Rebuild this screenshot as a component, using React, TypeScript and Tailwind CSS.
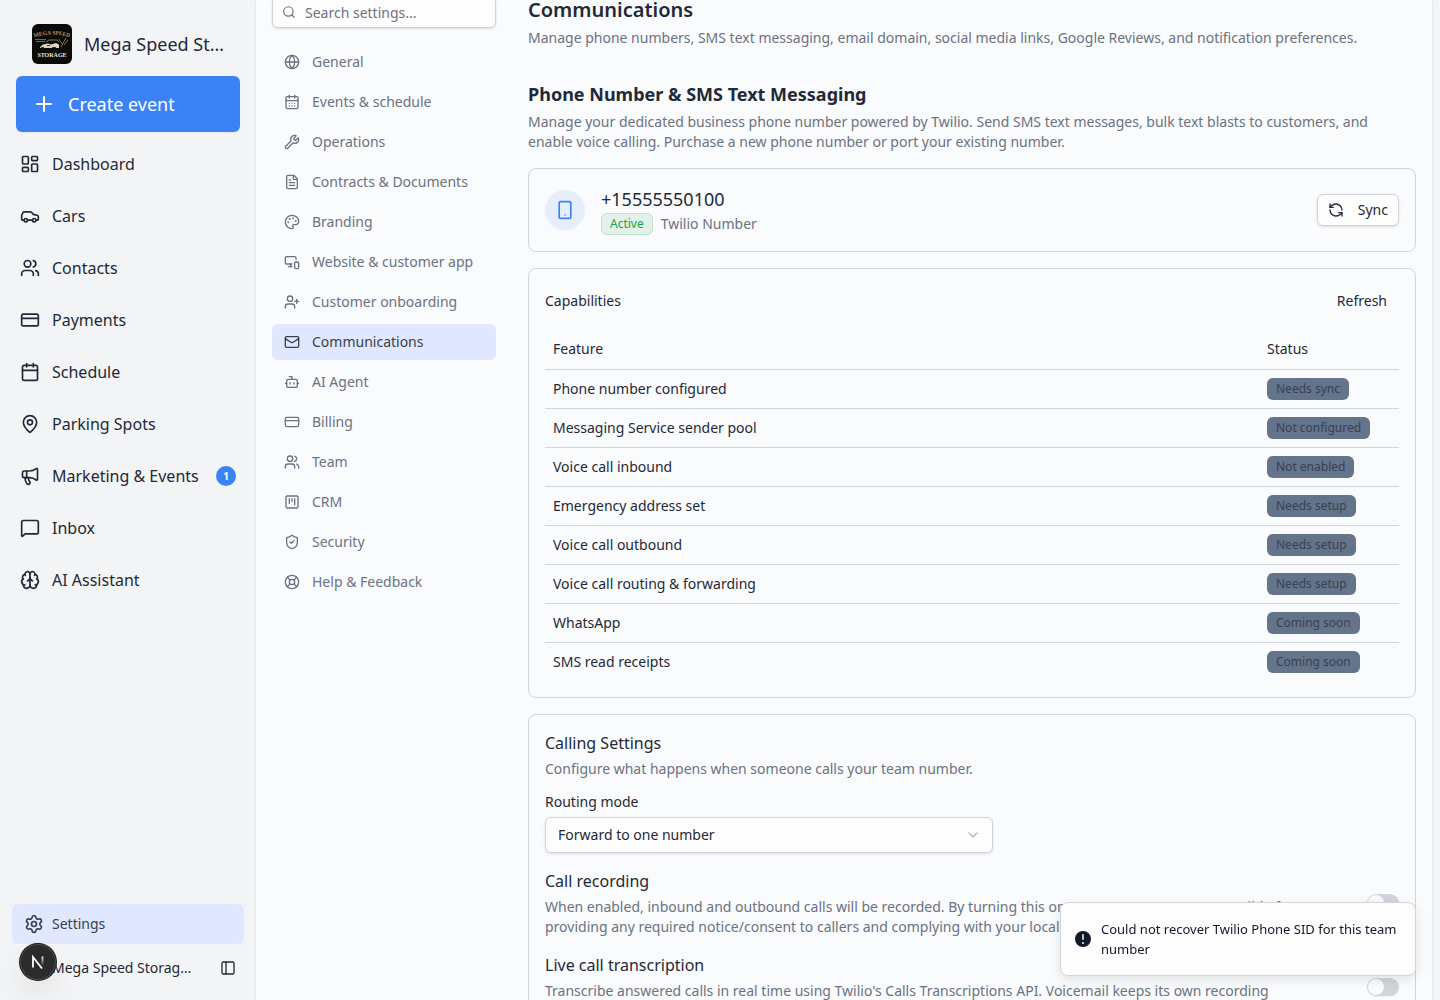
import React from 'react';
import {
  Bot,
  Brain,
  Calendar,
  CalendarDays,
  Car,
  ChevronDown,
  CreditCard,
  FileText,
  Globe,
  LayoutDashboard,
  LifeBuoy,
  Mail,
  MapPin,
  Megaphone,
  MessageSquare,
  MonitorSmartphone,
  Palette,
  PanelLeft,
  Plus,
  RefreshCcw,
  Search,
  Settings,
  ShieldCheck,
  Smartphone,
  SquareKanban,
  UserPlus,
  Users,
  Wrench,
} from 'lucide-react';
import type { LucideIcon } from 'lucide-react';

interface NavItem {
  label: string;
  icon: LucideIcon;
  badge?: number;
}

const mainNav: NavItem[] = [
  { label: 'Dashboard', icon: LayoutDashboard },
  { label: 'Cars', icon: Car },
  { label: 'Contacts', icon: Users },
  { label: 'Payments', icon: CreditCard },
  { label: 'Schedule', icon: Calendar },
  { label: 'Parking Spots', icon: MapPin },
  { label: 'Marketing & Events', icon: Megaphone, badge: 1 },
  { label: 'Inbox', icon: MessageSquare },
  { label: 'AI Assistant', icon: Brain },
];

const settingsNav: NavItem[] = [
  { label: 'General', icon: Globe },
  { label: 'Events & schedule', icon: CalendarDays },
  { label: 'Operations', icon: Wrench },
  { label: 'Contracts & Documents', icon: FileText },
  { label: 'Branding', icon: Palette },
  { label: 'Website & customer app', icon: MonitorSmartphone },
  { label: 'Customer onboarding', icon: UserPlus },
  { label: 'Communications', icon: Mail },
  { label: 'AI Agent', icon: Bot },
  { label: 'Billing', icon: CreditCard },
  { label: 'Team', icon: Users },
  { label: 'CRM', icon: SquareKanban },
  { label: 'Security', icon: ShieldCheck },
  { label: 'Help & Feedback', icon: LifeBuoy },
];

const capabilities = [
  { feature: 'Phone number configured', status: 'Needs sync' },
  { feature: 'Messaging Service sender pool', status: 'Not configured' },
  { feature: 'Voice call inbound', status: 'Not enabled' },
  { feature: 'Emergency address set', status: 'Needs setup' },
  { feature: 'Voice call outbound', status: 'Needs setup' },
  { feature: 'Voice call routing & forwarding', status: 'Needs setup' },
  { feature: 'WhatsApp', status: 'Coming soon' },
  { feature: 'SMS read receipts', status: 'Coming soon' },
];

const TeamLogo: React.FC = () => (
  <svg viewBox="0 0 40 40" className="size-10 shrink-0 rounded-md" aria-hidden="true">
    <rect width="40" height="40" fill="#0b0b09" />
    <path id="logo-arc" d="M2 13.500Q20 7.500 38 13.500" fill="none" />
    <text fontFamily="Liberation Serif, serif" fontSize="5.500" fontWeight="700" fill="#b39a6b">
      <textPath href="#logo-arc" startOffset="50%" textAnchor="middle">MEGA SPEED</textPath>
    </text>
    <path d="M3 15.500h11M4 17.500h9" stroke="#7d6a48" strokeWidth="1.200" />
    <path d="M14 18l3-2h8l2 2M27 15l3 5M34 14l-5 9M36 16l-4 5" stroke="#8d7a58" strokeWidth="0.900" fill="none" />
    <path d="M8 23l3-2.500 5-1 3 1 5-1.500 3 1.500v3.500H8z" fill="#d8d3c4" />
    <path d="M9 23.500h3M15 21.500h3M20 23.500h4" stroke="#25221a" strokeWidth="0.900" />
    <text x="20" y="32.500" textAnchor="middle" fontFamily="Liberation Serif, serif" fontSize="6" fontWeight="700" fill="#e8e4da">
      STORAGE
    </text>
  </svg>
);

const Sidebar: React.FC = () => (
  <aside className="flex h-screen w-64 shrink-0 flex-col">
    <div className="px-4 pt-6">
      <div className="flex items-center gap-3 px-4">
        <TeamLogo />
        <span className="truncate text-lg">Mega Speed Storage</span>
      </div>
      <button className="mt-3 flex h-14 w-full items-center gap-3 rounded-md bg-[#3b82f6] px-4 text-lg text-white shadow-xs">
        <Plus size={24} strokeWidth={2} />
        Create event
      </button>
    </div>
    <nav className="mt-2 flex flex-1 flex-col gap-1 px-3">
      {mainNav.map(({ label, icon: Icon, badge }) => (
        <a key={label} href="#" className="flex h-12 items-center gap-3 rounded-md px-2">
          <Icon size={20} className="shrink-0" />
          <span className="whitespace-nowrap">{label}</span>
          {badge && (
            <span className="ml-auto flex size-5 items-center justify-center rounded-full bg-[#3b82f6] text-[10px] font-bold text-white">
              {badge}
            </span>
          )}
        </a>
      ))}
    </nav>
    <div className="px-3 pb-2">
      <a href="#" className="flex h-10 items-center gap-2 rounded-md bg-[#e0e7ff] px-3 text-sm text-[#374151]">
        <Settings size={20} />
        Settings
      </a>
      <div className="flex h-12 items-center justify-between gap-6 pr-2 pl-10">
        <span className="truncate text-sm">Mega Speed Storage Club</span>
        <button aria-label="Toggle sidebar">
          <PanelLeft size={16} />
        </button>
      </div>
    </div>
  </aside>
);

const SettingsNav: React.FC = () => (
  <div className="w-56 shrink-0">
    <div className="relative">
      <Search size={14} className="absolute top-[9px] left-2.5 text-[#6b7280]" />
      <input
        type="text"
        aria-label="Search settings"
        placeholder="Search settings..."
        className="block h-8 w-full rounded-md border border-[#d1d5db] bg-[#fdfdfe] pr-3 pl-8 text-sm shadow-sm placeholder:text-[#6b7280]"
      />
    </div>
    <nav className="mt-4 flex flex-col gap-1">
      {settingsNav.map(({ label, icon: Icon }) => (
        <a
          key={label}
          href="#"
          className={
            label === 'Communications'
              ? 'flex h-9 items-center gap-3 rounded-md bg-[#e0e7ff] px-3 text-sm text-[#374151]'
              : 'flex h-9 items-center gap-3 rounded-md px-3 text-sm text-[#6b7280]'
          }
        >
          <Icon size={16} className="shrink-0" />
          {label}
        </a>
      ))}
    </nav>
  </div>
);

const SwitchRow: React.FC<{ id: string; title: string; text: string }> = ({ id, title, text }) => (
  <div className="mt-4 flex items-center justify-between">
    <div className="max-w-3xl">
      <label htmlFor={id} className="block text-base">{title}</label>
      <p className="mt-1 text-sm text-[#6b7280]">{text}</p>
    </div>
    <input
      id={id}
      type="checkbox"
      role="switch"
      className="h-[18px] w-8 shrink-0 appearance-none rounded-full border border-transparent bg-[#d1d5db] shadow-xs before:block before:size-4 before:rounded-full before:bg-[#f9fafb]"
    />
  </div>
);

const App: React.FC = () => {
  return (
    <div className="flex h-screen overflow-hidden bg-[#f3f4f6] font-['Noto_Sans',sans-serif] text-[#1f2937]">
      <Sidebar />
      <main className="mr-2 min-w-0 flex-1 bg-[#fafbfd] px-4 shadow-sm">
        <div className="-mt-1 flex gap-8">
          <SettingsNav />
          <div className="min-w-0 flex-1">
            <h1 className="text-xl leading-7 font-semibold">Communications</h1>
            <p className="mt-1 text-sm text-[#6b7280]">
              Manage phone numbers, SMS text messaging, email domain, social media links, Google Reviews, and notification preferences.
            </p>

            <h2 className="mt-8 text-lg font-bold">Phone Number &amp; SMS Text Messaging</h2>
            <p className="mt-1 text-sm text-[#6b7280]">
              Manage your dedicated business phone number powered by Twilio. Send SMS text messages, bulk text blasts to customers, and
              enable voice calling. Purchase a new phone number or port your existing number.
            </p>

            {/* Phone number */}
            <section className="mt-4 flex items-center gap-4 rounded-lg border border-[#d1d5db] p-4">
              <div className="flex size-10 items-center justify-center rounded-full bg-[#3b82f6]/10 text-[#3b82f6]">
                <Smartphone size={20} />
              </div>
              <div className="flex-1">
                <div className="text-lg">+15555550100</div>
                <div className="flex items-center gap-2">
                  <span className="rounded-md border border-[#16a34a]/20 bg-[#16a34a]/10 px-2 py-0.5 text-xs text-[#16a34a]">
                    Active
                  </span>
                  <span className="text-sm text-[#6b7280]">Twilio Number</span>
                </div>
              </div>
              <button className="flex h-8 items-center gap-3.5 rounded-md border border-[#d1d5db] bg-[#fdfdfe] px-2.5 text-sm shadow-sm">
                <RefreshCcw size={16} />
                Sync
              </button>
            </section>

            {/* Capabilities */}
            <section className="mt-4 rounded-lg border border-[#d1d5db] p-4">
              <div className="flex items-center justify-between">
                <h3 className="text-sm">Capabilities</h3>
                <button className="h-8 rounded-md px-3 text-sm">Refresh</button>
              </div>
              <table className="mt-3 w-full text-sm">
                <thead>
                  <tr className="border-b border-[#d1d5db]">
                    <th className="h-10 px-2 text-left font-normal">Feature</th>
                    <th className="h-10 w-[140px] px-2 text-left font-normal">Status</th>
                  </tr>
                </thead>
                <tbody>
                  {capabilities.map((row) => (
                    <tr key={row.feature} className="border-b border-[#d1d5db] last:border-0">
                      <td className="px-2">{row.feature}</td>
                      <td className="p-2">
                        <span className="block w-fit rounded-md border border-transparent bg-[#64748b] px-2 py-0.5 text-xs whitespace-nowrap text-[#374151]">
                          {row.status}
                        </span>
                      </td>
                    </tr>
                  ))}
                </tbody>
              </table>
            </section>

            {/* Calling settings */}
            <section className="mt-4 rounded-lg border border-[#d1d5db] p-4">
              <h3 className="text-base">Calling Settings</h3>
              <p className="mt-1 text-sm text-[#6b7280]">Configure what happens when someone calls your team number.</p>
              <label htmlFor="routing-mode" className="mt-4 block text-sm leading-none">Routing mode</label>
              <div className="relative mt-2 max-w-md">
                <select
                  id="routing-mode"
                  className="block h-9 w-full appearance-none rounded-md border border-[#d1d5db] bg-[#fdfdfe] px-3 text-sm shadow-sm"
                >
                  <option>Forward to one number</option>
                </select>
                <ChevronDown size={16} className="pointer-events-none absolute top-2.5 right-3 text-[#b0b5bd]" />
              </div>
              <SwitchRow
                id="call-recording"
                title="Call recording"
                text="When enabled, inbound and outbound calls will be recorded. By turning this on, you agree you are responsible for providing any required notice/consent to callers and complying with your local laws."
              />
              <SwitchRow
                id="live-transcription"
                title="Live call transcription"
                text="Transcribe answered calls in real time using Twilio's Calls Transcriptions API. Voicemail keeps its own recording transcription."
              />
            </section>
          </div>
        </div>
      </main>

      {/* Toast */}
      <div
        role="status"
        className="fixed right-6 bottom-6 flex w-[356px] items-center gap-2 rounded-lg border border-[#d1d5db] bg-[#fdfdfe] py-4 pr-4 pl-3 text-[13px] leading-5 text-[#111827] shadow-[0_4px_12px_rgba(0,0,0,0.1)]"
      >
        <svg viewBox="0 0 20 20" fill="currentColor" className="size-5 shrink-0" aria-hidden="true">
          <path
            fillRule="evenodd"
            clipRule="evenodd"
            d="M18 10a8 8 0 1 1-16 0 8 8 0 0 1 16 0Zm-8-5a.75.75 0 0 1 .75.75v4.500a.75.75 0 0 1-1.500 0v-4.500A.75.75 0 0 1 10 5Zm0 10a1 1 0 1 0 0-2 1 1 0 0 0 0 2Z"
          />
        </svg>
        <span>Could not recover Twilio Phone SID for this team number</span>
      </div>

      {/* Dev tools badge */}
      <button
        aria-label="Open developer tools"
        className="fixed bottom-5 left-5 flex size-9 items-center justify-center rounded-full bg-[#2b2b2b] shadow-[0_0_0_1px_#171717,inset_0_0_0_1px_#4b4b4b,0_16px_32px_-8px_rgba(0,0,0,0.24)]"
      >
        <svg viewBox="0 0 20 20" className="size-5" fill="none" aria-hidden="true">
          <defs>
            <linearGradient id="fade" x1="14" y1="4" x2="14" y2="14" gradientUnits="userSpaceOnUse">
              <stop stopColor="#fff" />
              <stop offset="1" stopColor="#fff" stopOpacity="0" />
            </linearGradient>
          </defs>
          <path d="M5 15.500V5l9 11.500" stroke="#fff" strokeWidth="1.800" />
          <path d="M14.500 4.500v9.500" stroke="url(#fade)" strokeWidth="1.800" />
        </svg>
      </button>
    </div>
  );
};

export default App;
